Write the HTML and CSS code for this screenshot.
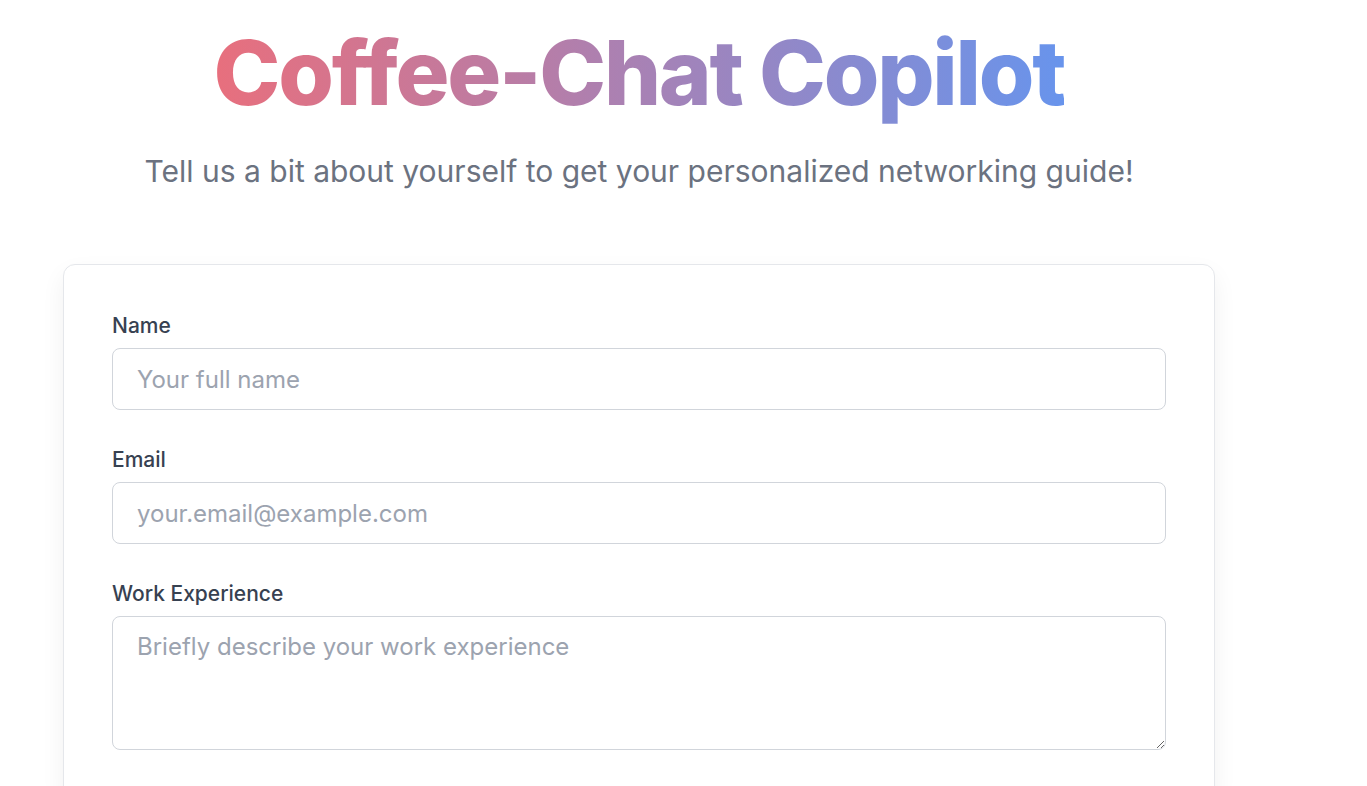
FILE: index.html
```html
<!DOCTYPE html>
<html lang="en">
<head>
    <meta charset="UTF-8">
    <title>Coffee-Chat Copilot</title>
    <link rel="stylesheet" href="styles.css">
</head>
<body>
    <div class="page">
        <div class="header">
            <h1 class="title">Coffee-Chat Copilot</h1>
            <p class="subtitle">Tell us a bit about yourself to get your personalized networking guide!</p>
        </div>

        <form class="card">
            <div class="field">
                <label for="name">Name</label>
                <input type="text" id="name" placeholder="Your full name">
            </div>
            <div class="field">
                <label for="email">Email</label>
                <input type="email" id="email" placeholder="your.email@example.com">
            </div>
            <div class="field">
                <label for="work">Work Experience</label>
                <textarea id="work" rows="3" placeholder="Briefly describe your work experience"></textarea>
            </div>
        </form>
    </div>
</body>
</html>
```

FILE: styles.css
```css
body {
    font-family: Inter, "Noto Sans", sans-serif;
    margin: 0;
    padding: 0;
    background: #fff;
    color: #1f2937;
}
.page {
    width: 1278px;
}
.header {
    text-align: center;
    padding-top: 19px;
}
.title {
    margin: 0;
    font-size: 90px;
    font-weight: 800;
    line-height: 1.2;
    letter-spacing: -0.025em;
    background: linear-gradient(90deg, #e86f7d, #6894ec);
    -webkit-background-clip: text;
    background-clip: text;
    color: transparent;
    display: inline-block;
}
.subtitle {
    margin: 24px 0 0 0;
    font-size: 30px;
    line-height: 40px;
    color: #6b7280;
}
.card {
    width: 1152px;
    box-sizing: border-box;
    margin: 73px auto 0 auto;
    padding: 47px 48px 48px 48px;
    background: #fff;
    border: 1px solid #e5e7eb;
    border-radius: 12px;
    box-shadow: 0 10px 25px rgba(0, 0, 0, 0.06);
    display: flex;
    flex-direction: column;
    gap: 36px;
}
.field {
    display: flex;
    flex-direction: column;
    gap: 8px;
}
label {
    font-size: 21px;
    line-height: 28px;
    font-weight: 500;
    color: #374151;
}
input, textarea {
    font-family: inherit;
    font-size: 24px;
    line-height: 30px;
    padding: 15px 24px;
    border: 1px solid #d1d5db;
    border-radius: 8px;
    color: #1f2937;
    box-sizing: border-box;
    width: 100%;
    outline: none;
}
input {
    height: 62px;
}
textarea {
    height: 134px;
    resize: vertical;
}
input::placeholder, textarea::placeholder {
    color: #9ca3af;
}
```
